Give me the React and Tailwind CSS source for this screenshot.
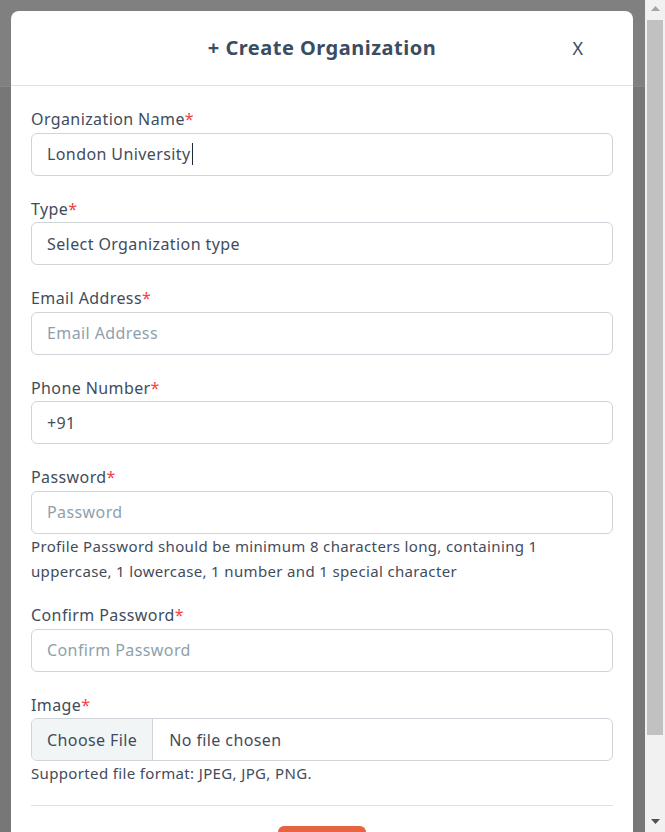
import React from "react";

const font = { fontFamily: '"Noto Sans", "Open Sans", sans-serif' };

function Label({ children }) {
  return (
    <div className="mb-[1.5px] text-[16px] leading-[24px] tracking-[0.4px] text-[#3f4c5c]">
      {children}
      <span className="text-[#ef4444]">*</span>
    </div>
  );
}

function Input({ value, placeholder, caret }) {
  return (
    <div className="flex h-[43px] items-center rounded-[6px] border border-[#ced4da] bg-white px-[15px] text-[16px] tracking-[0.4px]">
      {value ? (
        <span className="text-[#3f4c5c]">{value}</span>
      ) : (
        <span className="text-[#8e9fad]">{placeholder}</span>
      )}
      {caret && <span className="ml-[1px] h-[22px] w-[1px] bg-[#1f2937]" />}
    </div>
  );
}

export default function App() {
  return (
    <div className="flex h-[832px] w-[665px] overflow-hidden" style={font}>
      <div className="relative flex h-full flex-1 flex-col">
        <div className="h-[86px] bg-[#808080]" />
        <div className="h-[1px] bg-[#868686]" />
        <div className="flex-1 bg-[#777777]" />
        <div className="absolute left-[11px] top-[11px] w-[622px] rounded-t-[8px] bg-white">
          <div className="relative flex h-[75px] items-center justify-center border-b border-[#dee2e6]">
            <div className="text-[20px] font-bold tracking-[0.5px] text-[#3a4d62]">+ Create Organization</div>
            <div className="absolute right-[50px] top-[24px] text-[18px] text-[#3a4d62]">X</div>
          </div>
          <div className="px-[20px] pt-[21px]">
            <div className="mb-[21px]">
              <Label>Organization Name</Label>
              <Input value="London University" caret />
            </div>
            <div className="mb-[21px]">
              <Label>Type</Label>
              <Input value="Select Organization type" />
            </div>
            <div className="mb-[21px]">
              <Label>Email Address</Label>
              <Input placeholder="Email Address" />
            </div>
            <div className="mb-[21px]">
              <Label>Phone Number</Label>
              <Input value="+91" />
            </div>
            <div className="mb-[19.5px]">
              <Label>Password</Label>
              <Input placeholder="Password" />
              <div className="pr-[60px] text-[15px] leading-[25px] tracking-[0.35px] text-[#3f4c5c]">
                Profile Password should be minimum 8 characters long, containing 1 uppercase, 1 lowercase, 1 number and 1 special character
              </div>
            </div>
            <div className="mb-[21px]">
              <Label>Confirm Password</Label>
              <Input placeholder="Confirm Password" />
            </div>
            <div>
              <Label>Image</Label>
              <div className="flex h-[43px] overflow-hidden rounded-[6px] border border-[#ced4da] text-[16px] tracking-[0.4px] text-[#3f4c5c]">
                <div className="flex items-center border-r border-[#ced4da] bg-[#f1f5f6] px-[15px]">Choose File</div>
                <div className="flex items-center px-[16px]">No file chosen</div>
              </div>
              <div className="text-[15px] leading-[25px] tracking-[0.35px] text-[#3f4c5c]">Supported file format: JPEG, JPG, PNG.</div>
            </div>
            <div className="mt-[18.5px] h-[1px] bg-[#dee2e6]" />
            <div className="flex justify-center pt-[20px]">
              <div className="h-[40px] w-[88px] rounded-[6px] bg-[#e6643f]" />
            </div>
          </div>
        </div>
      </div>
      <div className="flex h-full w-[20px] flex-col items-center bg-[#f1f1f1]">
        <div className="flex h-[17px] items-center justify-center">
          <svg width="9" height="5" viewBox="0 0 9 5"><path d="M4.5 0L9 5H0z" fill="#a3a3a3" /></svg>
        </div>
        <div className="mt-[3px] h-[715px] w-[16px] bg-[#c1c1c1]" />
        <div className="flex-1" />
        <div className="flex h-[17px] items-center justify-center pb-[4px]">
          <svg width="9" height="5" viewBox="0 0 9 5"><path d="M0 0H9L4.5 5z" fill="#505050" /></svg>
        </div>
      </div>
    </div>
  );
}
